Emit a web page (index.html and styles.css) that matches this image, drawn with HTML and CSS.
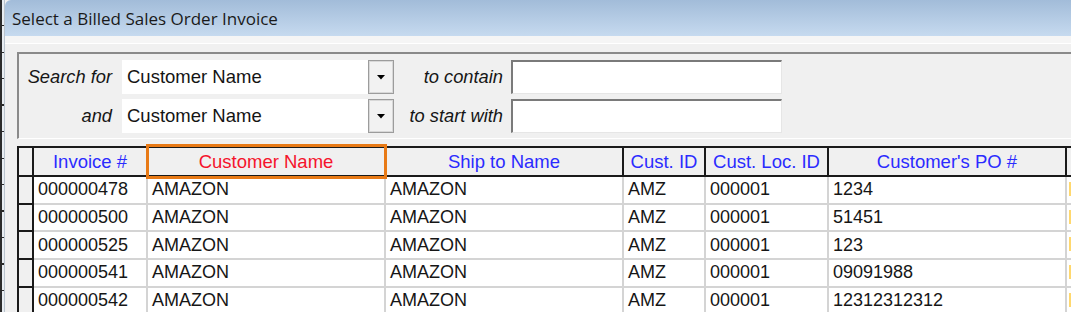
FILE: index.html
```
<!DOCTYPE html>
<html>
<head>
<meta charset="utf-8">
<link rel="stylesheet" href="styles.css">
</head>
<body>
<div class="screen">
  <div class="behind"></div>
  <div class="window">
    <div class="titlebar">Select a Billed Sales Order Invoice</div>
    <div class="band"></div>
    <div class="content">
      <div class="group">
        <div class="search">
          <span class="lbl">Search for</span>
          <div class="combo"><span class="val">Customer Name</span><span class="btn"><svg width="10" height="5" viewBox="0 0 10 5"><polygon points="1,0 9,0 5,4.5" fill="#000"/></svg></span></div>
          <span class="lbl lbl2">to contain</span>
          <div class="textbox"></div>
          <span class="lbl">and</span>
          <div class="combo"><span class="val">Customer Name</span><span class="btn"><svg width="10" height="5" viewBox="0 0 10 5"><polygon points="1,0 9,0 5,4.5" fill="#000"/></svg></span></div>
          <span class="lbl lbl2">to start with</span>
          <div class="textbox"></div>
        </div>
      </div>
      <div class="table">
        <div class="row hdr">
          <div class="cell gut"></div>
          <div class="cell">Invoice #</div>
          <div class="cell sorted">Customer Name</div>
          <div class="cell">Ship to Name</div>
          <div class="cell">Cust. ID</div>
          <div class="cell">Cust. Loc. ID</div>
          <div class="cell">Customer's PO #</div>
          <div class="cell"></div>
        </div>
        <div class="row data">
          <div class="cell gut"></div>
          <div class="cell">000000478</div>
          <div class="cell">AMAZON</div>
          <div class="cell">AMAZON</div>
          <div class="cell">AMZ</div>
          <div class="cell">000001</div>
          <div class="cell">1234</div>
          <div class="cell last"><span class="mark"></span></div>
        </div>
        <div class="row data">
          <div class="cell gut"></div>
          <div class="cell">000000500</div>
          <div class="cell">AMAZON</div>
          <div class="cell">AMAZON</div>
          <div class="cell">AMZ</div>
          <div class="cell">000001</div>
          <div class="cell">51451</div>
          <div class="cell last"><span class="mark"></span></div>
        </div>
        <div class="row data">
          <div class="cell gut"></div>
          <div class="cell">000000525</div>
          <div class="cell">AMAZON</div>
          <div class="cell">AMAZON</div>
          <div class="cell">AMZ</div>
          <div class="cell">000001</div>
          <div class="cell">123</div>
          <div class="cell last"><span class="mark"></span></div>
        </div>
        <div class="row data">
          <div class="cell gut"></div>
          <div class="cell">000000541</div>
          <div class="cell">AMAZON</div>
          <div class="cell">AMAZON</div>
          <div class="cell">AMZ</div>
          <div class="cell">000001</div>
          <div class="cell">09091988</div>
          <div class="cell last"><span class="mark"></span></div>
        </div>
        <div class="row data">
          <div class="cell gut"></div>
          <div class="cell">000000542</div>
          <div class="cell">AMAZON</div>
          <div class="cell">AMAZON</div>
          <div class="cell">AMZ</div>
          <div class="cell">000001</div>
          <div class="cell">12312312312</div>
          <div class="cell last"><span class="mark"></span></div>
        </div>
      </div>
    </div>
  </div>
</div>
</body>
</html>
```
FILE: styles.css
```
* { box-sizing: border-box; }
html, body { margin: 0; padding: 0; }
body {
  width: 1071px;
  height: 312px;
  overflow: hidden;
  background: #f0f0f0;
  font-family: "Liberation Sans", Arial, sans-serif;
}
.screen {
  display: flex;
  width: 1071px;
  height: 312px;
  overflow: hidden;
}
.behind {
  flex: 0 0 5px;
  background:
    repeating-linear-gradient(to bottom, transparent 0 25px, #2a2a2a 25px 26.5px) 0 0 / 4px 100% no-repeat,
    linear-gradient(to right, #2b2b2b 0 2px, #e8edf2 2px 4px, #b9c3cd 4px 5px);
}
.window {
  flex: 1 1 auto;
  min-width: 0;
  display: flex;
  flex-direction: column;
  background: #f0f0f0;
  overflow: hidden;
}
.titlebar {
  flex: 0 0 36px;
  display: flex;
  align-items: center;
  padding-left: 7px;
  border-top-left-radius: 6px;
  background: linear-gradient(to bottom, #a2bcd9, #c6daef);
  font-family: "Open Sans", "Noto Sans", sans-serif;
  font-size: 17px;
  color: #1a1a1a;
  white-space: nowrap;
}
.band {
  flex: 0 0 8px;
  background: #f5f5f5;
  border-bottom: 1px solid #ffffff;
}
.content {
  padding-left: 12px;
  padding-top: 8px;
}
.group {
  border-top: 2px solid #8a8a8a;
  border-left: 2px solid #8a8a8a;
  border-bottom: 1px solid #ffffff;
  padding: 6px 0 5px 0;
}
.search {
  display: grid;
  grid-template-columns: 103px 272px 117px 271px;
  grid-template-rows: 34px 34px;
  row-gap: 5px;
}
.lbl {
  display: flex;
  align-items: center;
  justify-content: flex-end;
  padding-right: 10px;
  font-style: italic;
  font-size: 18.3px;
  color: #161616;
  white-space: nowrap;
}
.lbl2 { padding-right: 8px; }
.combo {
  display: flex;
  background: #ffffff;
}
.combo .val {
  flex: 1 1 auto;
  display: flex;
  align-items: center;
  padding-left: 5px;
  font-size: 18.5px;
  color: #141414;
  white-space: nowrap;
}
.combo .btn {
  flex: 0 0 26px;
  display: flex;
  align-items: center;
  justify-content: center;
  background: #f2f2f2;
  border: 1px solid #9c9c9c;
  box-shadow: inset 0 0 0 1px #d8d8d8;
}
.textbox {
  background: #ffffff;
  border-top: 2px solid #7a7a7a;
  border-left: 2px solid #7a7a7a;
  border-right: 1px solid #e6e6e6;
  border-bottom: 1px solid #e6e6e6;
}
.table {
  margin-top: 7px;
  border-left: 2px solid #1a1a1a;
  width: 1100px;
}
.row {
  display: grid;
  grid-template-columns: 15px 114px 238px 238px 82px 123px 238px 60px;
}
.cell {
  display: flex;
  align-items: center;
  white-space: nowrap;
  overflow: visible;
}
.hdr {
  border-top: 2px solid #1a1a1a;
  border-bottom: 2px solid #1a1a1a;
  height: 31px;
  background: #f0f0f0;
}
.hdr .cell {
  justify-content: center;
  border-right: 2px solid #1a1a1a;
  font-size: 18.5px;
  color: #2b2bff;
}
.hdr .sorted {
  position: relative;
  color: #f5142c;
}
.hdr .sorted::after {
  content: "";
  position: absolute;
  left: -2px;
  right: -3px;
  top: -4px;
  bottom: -4px;
  border: 3px solid #e87a16;
}
.data {
  height: 27.7px;
}
.data .cell {
  background: #ffffff;
  border-right: 2px solid #d4d4d4;
  border-bottom: 2px solid #d4d4d4;
  padding-left: 4px;
  font-size: 18px;
  color: #161616;
}
.data .gut {
  background: #f0f0f0;
  border-right: 2px solid #1a1a1a;
  border-bottom: 2px solid #1a1a1a;
}
.data .last {
  align-items: flex-start;
  padding-left: 2px;
  padding-top: 5px;
}
.mark {
  display: block;
  width: 10px;
  height: 14px;
  background: #ffd86e;
}
```
